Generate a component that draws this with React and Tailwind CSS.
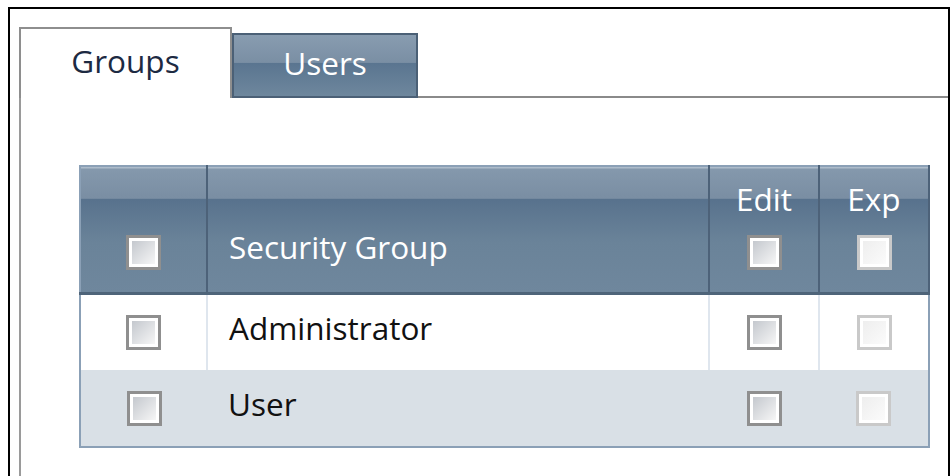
import React from "react";

// ── Checkbox ──────────────────────────────────────────────────────────────────
const Box = ({ muted = false }) => (
  <div
    className={`mx-auto w-[35px] h-[35px] border-[3px] p-[3px] bg-white ${
      muted ? "border-[#c9c9c9]" : "border-[#8f8f8f]"
    }`}
  >
    <div
      className={`w-full h-full ${
        muted
          ? "bg-[linear-gradient(135deg,#eeeeee,#fbfbfb)]"
          : "bg-[linear-gradient(135deg,#c4c8ce,#f6f6f6)]"
      }`}
    />
  </div>
);

const headCell =
  "align-bottom pb-[22px] border-r-2 border-[#4d6279] bg-[linear-gradient(to_bottom,#b8c5d2_0%,#8498ac_2%,#7a8ea3_25%,#58728d_26%,#6a8399_60%,#6f879d_100%)]";

const rows = [
  { name: "Administrator", bg: "bg-white", sep: "border-r-2 border-[#dfe6ee]" },
  { name: "User", bg: "bg-[#d9e0e6]", sep: "border-r-0" },
];

export default function App() {
  return (
    <div className="w-[952px] h-[476px] bg-white overflow-hidden pt-[7px] pl-[8px] font-['Open_Sans',sans-serif]">
      <div className="w-[942px] h-[469px] border-2 border-b-0 border-black pt-[18px] pl-[9px] flex flex-col">
        {/* tabs */}
        <div className="flex items-end h-[71px] shrink-0">
          <div className="w-[213px] h-[71px] border-2 border-b-0 border-[#8e8e8e] bg-white flex items-center justify-center pb-[6px] text-[31.5px] text-[#1d2a42]">
            Groups
          </div>
          <div className="w-[186px] h-[65px] border-2 border-[#4b6076] bg-[linear-gradient(to_bottom,#889cb0_0%,#7a8fa4_45%,#5a7590_46%,#6e879d_100%)] flex items-center justify-center pb-[6px] text-[31.5px] text-white">
            Users
          </div>
          <div className="flex-1 border-b-2 border-[#8a8a8a]" />
        </div>

        {/* panel */}
        <div className="flex-1 border-l-2 border-[#9a9a9a] pl-[58px] pt-[67px]">
          <table className="w-[851px] border-collapse border-2 border-[#8ba0b6] table-fixed text-[31.5px]">
            <colgroup>
              <col className="w-[127px]" />
              <col />
              <col className="w-[110px]" />
              <col className="w-[110px]" />
            </colgroup>
            <thead>
              <tr className="h-[127px] border-b-[3px] border-[#4e6479] text-white">
                <th className={headCell}>
                  <Box />
                </th>
                <th className={`${headCell} text-left font-normal pl-[21px]`}>
                  <div className="leading-[40px] mb-[3px]">Security Group</div>
                </th>
                <th className={`${headCell} font-normal`}>
                  <div className="leading-[40px] mb-[16px]">Edit</div>
                  <Box />
                </th>
                <th className={`${headCell} border-r-0 font-normal`}>
                  <div className="leading-[40px] mb-[16px]">Exp</div>
                  <Box muted />
                </th>
              </tr>
            </thead>
            <tbody>
              {rows.map((r) => (
                <tr key={r.name} className={`h-[77px] ${r.bg}`}>
                  <td className={`align-middle ${r.sep}`}>
                    <Box />
                  </td>
                  <td className={`align-middle ${r.sep} pl-[21px] pb-[8px] leading-[40px] text-[#111]`}>
                    {r.name}
                  </td>
                  <td className={`align-middle ${r.sep}`}>
                    <Box />
                  </td>
                  <td className="align-middle">
                    <Box muted />
                  </td>
                </tr>
              ))}
            </tbody>
          </table>
        </div>
      </div>
    </div>
  );
}
